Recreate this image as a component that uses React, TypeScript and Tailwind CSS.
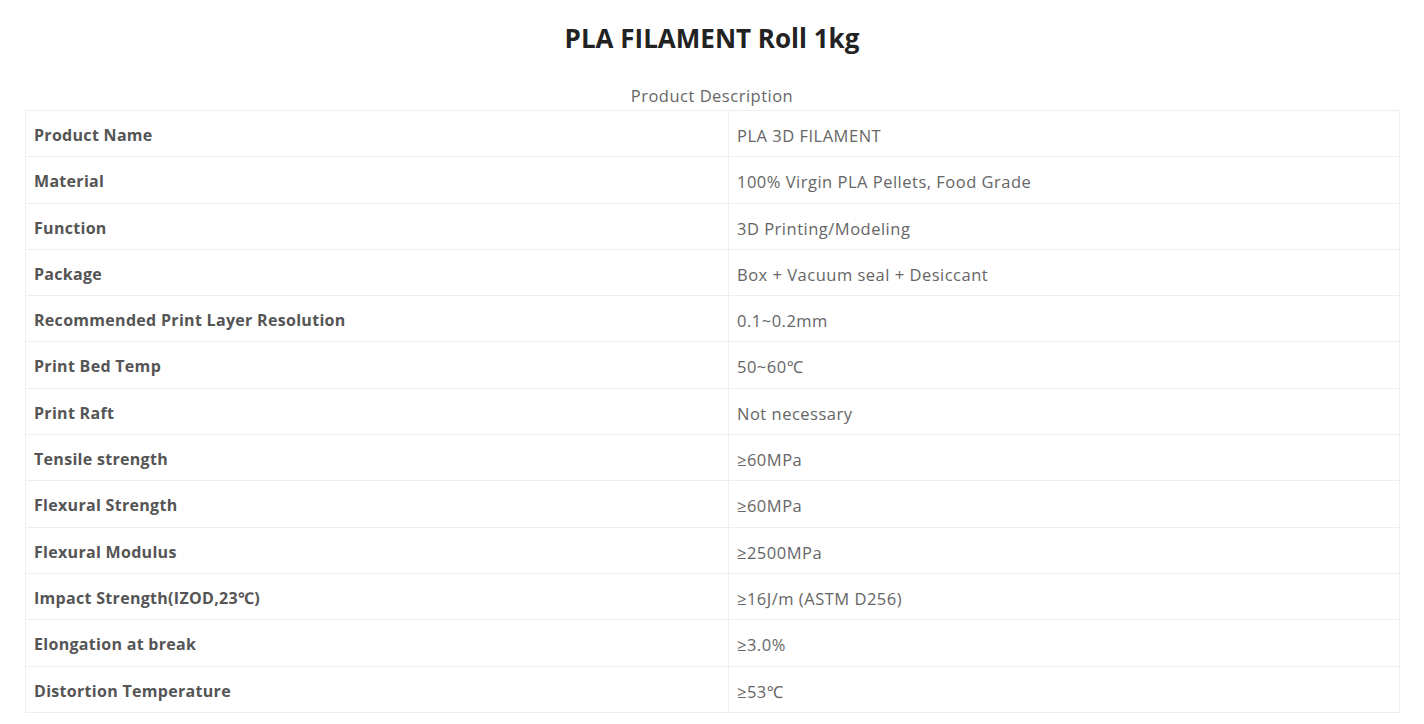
import React from "react";

const rows: [string, string][] = [
  ["Product Name", "PLA 3D FILAMENT"],
  ["Material", "100% Virgin PLA Pellets, Food Grade"],
  ["Function", "3D Printing/Modeling"],
  ["Package", "Box + Vacuum seal + Desiccant"],
  ["Recommended Print Layer Resolution", "0.1~0.2mm"],
  ["Print Bed Temp", "50~60℃"],
  ["Print Raft", "Not necessary"],
  ["Tensile strength", "≥60MPa"],
  ["Flexural Strength", "≥60MPa"],
  ["Flexural Modulus", "≥2500MPa"],
  ["Impact Strength(IZOD,23℃)", "≥16J/m (ASTM D256)"],
  ["Elongation at break", "≥3.0%"],
  ["Distortion Temperature", "≥53℃"],
];

export default function App() {
  return (
    <div
      className="w-full bg-white px-[25px] text-[#555]"
      style={{ fontFamily: '"Open Sans", "Noto Sans", sans-serif' }}
    >
      <h1 className="pt-[20px] text-center text-[26px] font-bold leading-[36px] text-[#222]">
        PLA FILAMENT Roll 1kg
      </h1>
      <div className="mt-[28px] mb-[2px] text-center text-[16.5px] leading-[24px] tracking-[0.5px] text-[#666]">
        Product Description
      </div>
      <table className="w-[1375px] border-collapse">
        <tbody>
          {rows.map(([k, v]) => (
            <tr key={k}>
              <td className="w-[703px] border border-[#eee] px-[8px] pt-[13px] pb-[9px] text-[16px] font-bold leading-[23.3px] tracking-[0.3px] text-[#555]">
                {k}
              </td>
              <td className="border border-[#eee] px-[8px] pt-[13px] pb-[9px] text-[16.5px] leading-[23.3px] tracking-[0.5px] text-[#666]">
                {v}
              </td>
            </tr>
          ))}
        </tbody>
      </table>
    </div>
  );
}
